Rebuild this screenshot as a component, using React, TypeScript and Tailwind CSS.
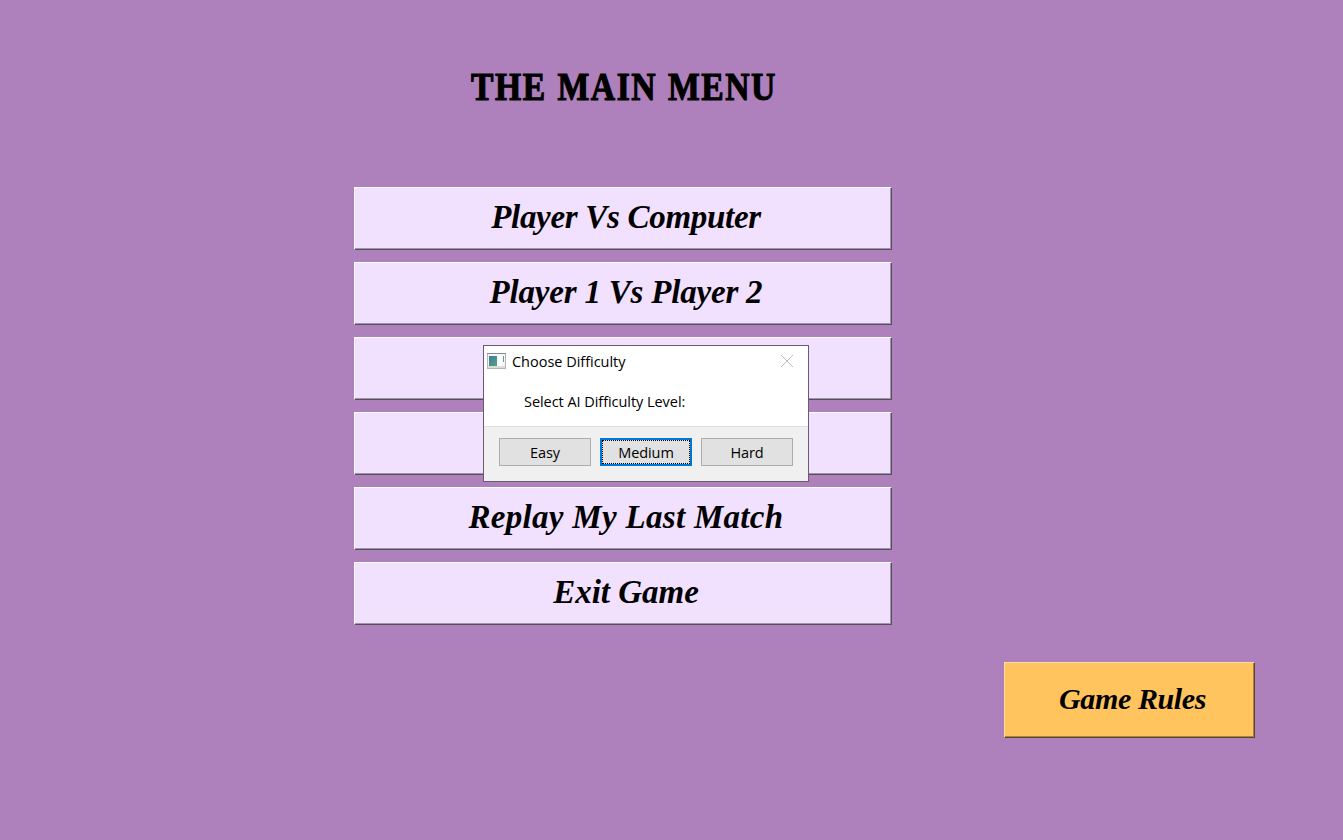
const menuItems = [
  { label: "Player Vs Computer", spacing: "tracking-[-0.3px]" },
  { label: "Player 1 Vs Player 2", spacing: "tracking-[-0.2px]" },
  { label: "", spacing: "" },
  { label: "", spacing: "" },
  { label: "Replay My Last Match", spacing: "tracking-[0.3px]" },
  { label: "Exit Game", spacing: "tracking-[0px]" },
];

const script =
  "pb-[2px] font-['Monotype_Corsiva','Liberation_Serif',serif] leading-none font-bold italic whitespace-pre";

function Title() {
  return (
    <h1 className="flex h-[187px] w-[1248px] origin-center scale-x-[0.82] justify-center pt-[66px] font-['Stencil','Liberation_Serif',serif] text-[41px] leading-[41px] font-bold tracking-[1.9px] whitespace-pre [-webkit-text-stroke:1.2px_black] [word-spacing:1px]">
      THE MAIN MENU
    </h1>
  );
}

function WindowIcon() {
  return (
    <svg width="19" height="16" viewBox="0 0 19 16" shapeRendering="crispEdges">
      <defs>
        <linearGradient id="pane" x1="0" y1="0" x2="1" y2="1">
          <stop offset="0" stopColor="#4278a8" />
          <stop offset="1" stopColor="#50a878" />
        </linearGradient>
      </defs>
      <rect x="0.5" y="0.5" width="18" height="15" fill="#f7f7f7" stroke="#b4b4b4" />
      <rect x="0" y="0" width="19" height="1" fill="#858b91" />
      <rect x="2" y="3" width="8" height="10" fill="url(#pane)" />
      <rect x="11" y="3" width="4" height="10" fill="#ffffff" />
      <rect x="16" y="3" width="1" height="6" fill="#55a497" />
      <rect x="1" y="13" width="17" height="2" fill="#dcdcdc" />
    </svg>
  );
}

function Dialog() {
  return (
    <div className="absolute top-[345px] left-[483px] flex h-[137px] w-[326px] flex-col border border-[#6a5a72] bg-white font-['Segoe_UI','Open_Sans',sans-serif] text-[14.5px] text-black">
      <div className="flex h-[31px] items-center pr-[15px] pb-px pl-[3px]">
        <div className="-mt-px"><WindowIcon /></div>
        <span className="ml-[6px] flex-1 pt-[2px] tracking-[-0.02px]">Choose Difficulty</span>
        <svg width="12" height="12" viewBox="0 0 12 12" stroke="#bdbdbd" strokeWidth="1">
          <path d="M0 0L12 12M12 0L0 12" />
        </svg>
      </div>
      <p className="flex-1 pt-[15px] pl-10 leading-[20px] tracking-[-0.05px]">Select AI Difficulty Level:</p>
      <div className="flex h-[55px] gap-[9px] border-t border-[#dfdfdf] bg-[#f0f0f0] px-[15px] pt-[11px] tracking-[-0.1px]">
        <button className="h-7 w-[92px] border border-[#adadad] bg-[#e1e1e1] pt-[2px]">Easy</button>
        <button className="h-7 w-[92px] border-2 border-[#0078d7] bg-[#e1e1e1]">
          <span className="flex h-full items-center justify-center border border-dotted border-black pt-[2px]">Medium</span>
        </button>
        <button className="h-7 w-[92px] border border-[#adadad] bg-[#e1e1e1] pt-[2px]">Hard</button>
      </div>
    </div>
  );
}

export default function App() {
  return (
    <main className="relative flex h-[840px] w-[1343px] flex-col overflow-hidden bg-[#ae80bc] text-black">
      <Title />
      <nav className="ml-[354px] flex w-[538px] flex-col gap-3">
        {menuItems.map((item, i) => (
          <button
            key={i}
            className="flex h-[63px] items-center justify-center border border-t-white border-r-[#554f5a] border-b-[#554f5a] border-l-white bg-[#f1e1ff] pl-[6px] shadow-[inset_-1px_-1px_0_#a096aa]"
          >
            <span className={`${script} text-[33px] ${item.spacing}`}>{item.label}</span>
          </button>
        ))}
      </nav>
      <button className="mt-[37px] ml-[1004px] flex h-[76px] w-[251px] items-center justify-center border border-t-[#ffdb9d] border-r-[#59452a] border-b-[#59452a] border-l-[#ffdb9d] bg-[#ffc45e] pl-[6px] shadow-[inset_-1px_-1px_0_#aa823f]">
        <span className={`${script} text-[30px] tracking-[-0.4px]`}>Game Rules</span>
      </button>
      <Dialog />
    </main>
  );
}
